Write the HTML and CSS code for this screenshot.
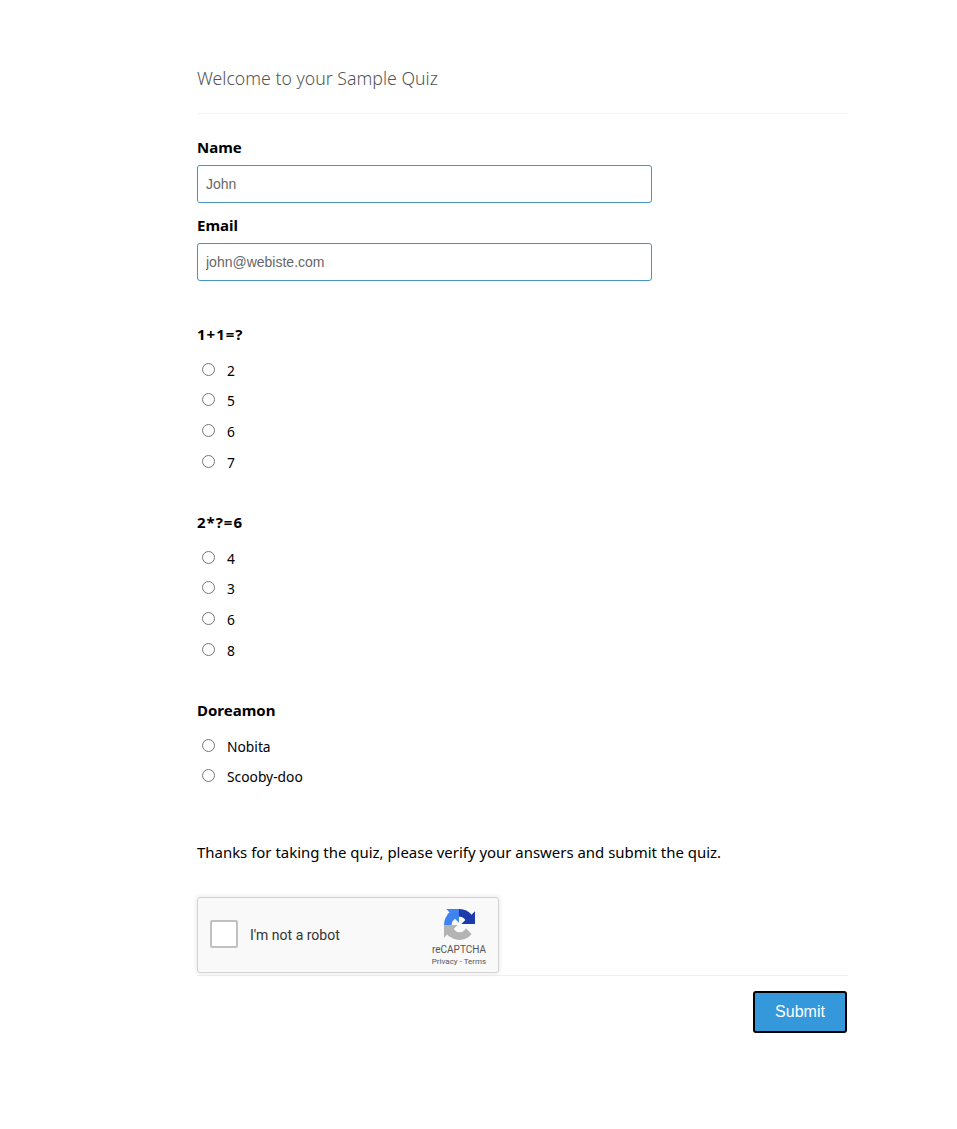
FILE: index.html
```html
<!DOCTYPE html>
<html lang="en">
<head>
<meta charset="utf-8">
<title>Sample Quiz</title>
<link rel="stylesheet" href="styles.css">
</head>
<body>
<form class="quiz">
  <h1 class="title">Welcome to your Sample Quiz</h1>
  <div class="contact">
    <label class="field-label" for="name">Name</label>
    <input class="field" id="name" type="text" placeholder="John">
    <label class="field-label" for="email">Email</label>
    <input class="field" id="email" type="text" placeholder="john@webiste.com">
  </div>
  <fieldset class="question">
    <legend class="q-title q-title-math">1+1=?</legend>
    <label class="option"><input type="radio" name="q1"><span>2</span></label>
    <label class="option"><input type="radio" name="q1"><span>5</span></label>
    <label class="option"><input type="radio" name="q1"><span>6</span></label>
    <label class="option"><input type="radio" name="q1"><span>7</span></label>
  </fieldset>
  <fieldset class="question">
    <legend class="q-title q-title-math">2*?=6</legend>
    <label class="option"><input type="radio" name="q2"><span>4</span></label>
    <label class="option"><input type="radio" name="q2"><span>3</span></label>
    <label class="option"><input type="radio" name="q2"><span>6</span></label>
    <label class="option"><input type="radio" name="q2"><span>8</span></label>
  </fieldset>
  <fieldset class="question">
    <legend class="q-title">Doreamon</legend>
    <label class="option"><input type="radio" name="q3"><span>Nobita</span></label>
    <label class="option"><input type="radio" name="q3"><span>Scooby-doo</span></label>
  </fieldset>
  <p class="thanks">Thanks for taking the quiz, please verify your answers and submit the quiz.</p>
  <div class="captcha">
    <span class="captcha-box"></span>
    <span class="captcha-text">I'm not a robot</span>
    <div class="captcha-brand">
      <svg class="captcha-logo" viewBox="0 0 64 64" aria-hidden="true">
        <path fill="#1c3aa9" d="M64 31.955l-.033-1.37V4.687l-7.16 7.16C50.948 4.674 42.033.093 32.050.093 21.960.093 12.964 4.769 7.080 12.080l11.736 11.860a15.500 15.500 0 0 1 4.535-5.235c2.043-1.600 4.963-2.900 8.700-2.900.452 0 .8.053 1.047.153 4.630.365 8.643 2.920 11.008 6.630l-8.300 8.300 32.300.067"/>
        <path fill="#3f82f0" d="M31.950.003l-1.370.033H4.680l7.160 7.160C4.673 13.050.092 21.965.092 31.947c0 10.090 4.676 19.087 11.988 24.970l11.860-11.736a15.500 15.500 0 0 1-5.235-4.535c-1.600-2.043-2.900-4.963-2.900-8.700 0-.452.053-.8.153-1.047.365-4.630 2.920-8.643 6.630-11.008l8.300 8.300.067-32.300"/>
        <path fill="#b4b4b4" d="M.002 31.953l.033 1.370v25.900l7.160-7.160c5.860 7.173 14.775 11.754 24.757 11.754 10.100 0 19.086-4.676 24.970-11.988l-11.736-11.860a15.500 15.500 0 0 1-4.535 5.235c-2.043 1.600-4.963 2.900-8.700 2.900-.452 0-.8-.053-1.047-.153-4.630-.365-8.643-2.920-11.008-6.630l8.300-8.300-32.300-.067"/>
      </svg>
      <span class="captcha-name">reCAPTCHA</span>
      <span class="captcha-links">Privacy - Terms</span>
    </div>
  </div>
  <div class="actions">
    <button class="submit" type="button">Submit</button>
  </div>
</form>
</body>
</html>
```
FILE: styles.css
```css
* { box-sizing: border-box; }
html, body { margin: 0; background: #fff; }
body {
  font-family: "Noto Sans", "Open Sans", sans-serif;
  color: #000;
  height: 1129px;
  overflow: hidden;
}
.quiz {
  width: 651px;
  margin-left: 197px;
  padding-top: 65px;
}
.title {
  margin: 0;
  height: 49px;
  font-size: 17.700px;
  line-height: 26px;
  font-weight: 300;
  color: #555;
  border-bottom: 1px solid #f3f3f3;
}
.contact { padding-top: 23px; }
.field-label {
  display: block;
  height: 18px;
  font-size: 15px;
  line-height: 20px;
  font-weight: 700;
}
.field {
  display: block;
  width: 455px;
  height: 38px;
  margin: 10px 0 12px;
  padding: 0 8px;
  border: 1px solid #4a93bd;
  border-radius: 3px;
  font-family: "Liberation Sans", Arial, sans-serif;
  font-size: 14px;
  background: #fff;
}
.field:last-child { margin-bottom: 0; }
.field::placeholder { color: #666; opacity: 1; }
.question {
  margin: 0;
  padding: 0;
  border: 0;
  height: 188px;
}
.contact + .question { margin-top: 43px; }
.question:last-of-type { height: 142px; }
.q-title {
  display: block;
  padding: 0;
  height: 31px;
  font-size: 15px;
  line-height: 20px;
  font-weight: 700;
}
.q-title-math { letter-spacing: 1px; }
.option {
  display: flex;
  align-items: center;
  height: 30.670px;
  padding-left: 5px;
  font-size: 13.800px;
}
.option input { margin: 0 12px 2px 0; width: 13px; height: 13px; }
.thanks {
  margin: 0;
  height: 55px;
  font-size: 14.950px;
  line-height: 20px;
}
.captcha {
  display: flex;
  align-items: center;
  position: relative;
  width: 302px;
  height: 76px;
  background: #f9f9f9;
  border: 1px solid #d3d3d3;
  border-radius: 3px;
  box-shadow: 0 0 4px 1px rgba(0,0,0,.08);
}
.captcha-box {
  width: 28px;
  height: 28px;
  margin: 0 0 2px 12px;
  background: #fff;
  border: 2px solid #c1c1c1;
  border-radius: 2px;
}
.captcha-text {
  margin-left: 12px;
  font-family: Roboto, sans-serif;
  font-size: 14px;
  color: #333;
}
.captcha-brand {
  position: absolute;
  top: 11px;
  right: 10px;
  width: 58px;
  display: flex;
  flex-direction: column;
  align-items: center;
  font-family: Roboto, sans-serif;
  color: #555;
}
.captcha-logo { display: block; width: 31px; height: 31px; }
.captcha-name { font-size: 10px; line-height: 12px; margin-top: 4px; }
.captcha-links { font-size: 8px; line-height: 12px; white-space: nowrap; }
.actions {
  display: flex;
  justify-content: flex-end;
  margin-top: 2px;
  padding: 15px 1px 0 0;
  border-top: 1px solid #f0f0f0;
}
.submit {
  width: 94px;
  height: 42px;
  background: #3498db;
  border: 2px solid #000;
  border-radius: 3px;
  color: #fff;
  font-family: "Liberation Sans", Arial, sans-serif;
  font-size: 16px;
}
```
